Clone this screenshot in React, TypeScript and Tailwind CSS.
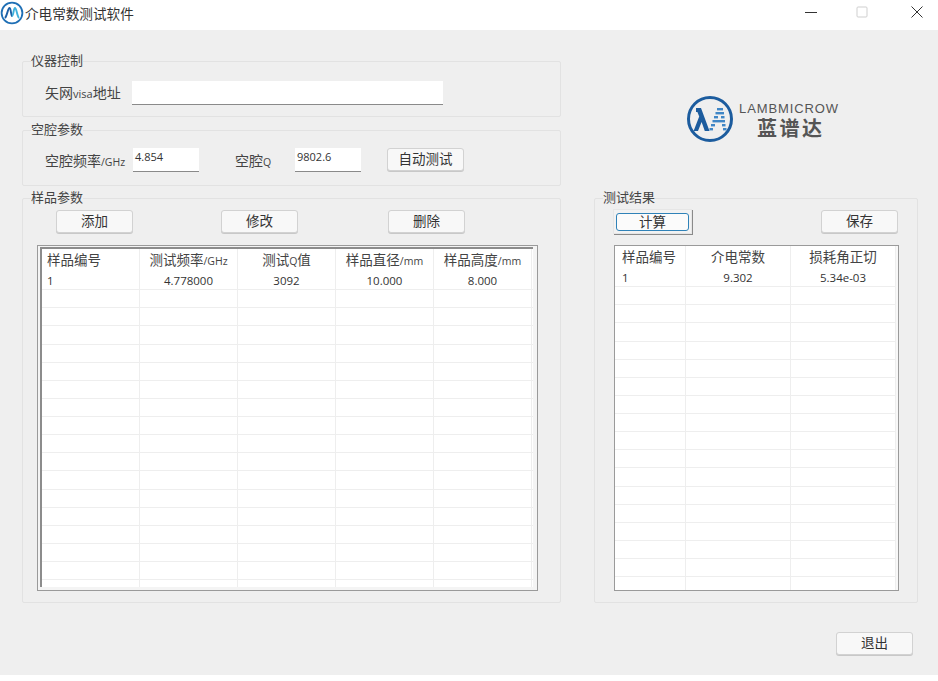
const cjk = "font-['Noto_Sans_CJK_SC','Noto_Sans',sans-serif]";

function Button({ label, className = "" }: { label: string; className?: string }) {
  return (
    <button className={`h-[23px] w-[77px] rounded-[3px] border border-[#d2d2d2] bg-[#f8f8f8] pb-[3px] text-[13.5px] leading-[18px] text-[#333] shadow-[0_1px_0_#c8c8c8] ${className}`}>
      {label}
    </button>
  );
}

function Group({ title, className = "", children }: { title: string; className?: string; children: React.ReactNode }) {
  return (
    <div className={`relative rounded-[2px] border border-[#e2e2e2] ${className}`}>
      <span className="absolute left-[8px] top-[-11px] bg-[#efefef] text-[13px] leading-[18px] text-[#444]">{title}</span>
      {children}
    </div>
  );
}

function Input({ value = "", className = "" }: { value?: string; className?: string }) {
  return (
    <div className={`flex h-[24px] items-start border-b border-[#8a8a8a] bg-white pl-[2px] pt-[1px] font-['Open_Sans',sans-serif] text-[11px] leading-[16px] text-[#333] ${className}`}>
      {value}
    </div>
  );
}

function Cell({ w, pad, children }: { w: number; pad?: string; children?: React.ReactNode }) {
  return (
    <div
      className={`h-full shrink-0 overflow-hidden whitespace-nowrap border-r border-[#eeeeee] ${pad ? `${pad} text-left` : "text-center"}`}
      style={{ width: w }}
    >
      {children}
    </div>
  );
}

function Unit({ children }: { children: React.ReactNode }) {
  return <span className="font-['Open_Sans',sans-serif] text-[10.5px] text-[#444]">{children}</span>;
}

function DataTable({
  widths,
  headers,
  row,
  rowCount,
  firstPad,
}: {
  widths: number[];
  headers: React.ReactNode[];
  row: string[];
  rowCount: number;
  firstPad: string;
}) {
  return (
    <div className="h-full overflow-hidden bg-white">
      <div className="flex h-[23px] text-[13.5px] leading-[20px] text-[#444]">
        {headers.map((h, i) => (
          <Cell key={i} w={widths[i]} pad={i === 0 ? firstPad : undefined}>
            {h}
          </Cell>
        ))}
      </div>
      {Array.from({ length: rowCount }).map((_, r) => (
        <div key={r} className="flex h-[18.125px] border-b border-[#eeeeee] font-['Open_Sans',sans-serif] text-[11.5px] leading-[17px] text-[#333]">
          {widths.map((w, i) => (
            <Cell key={i} w={w} pad={i === 0 ? firstPad : undefined}>
              {r === 0 ? row[i] : ""}
            </Cell>
          ))}
        </div>
      ))}
    </div>
  );
}

function TitleIcon() {
  return (
    <svg viewBox="0 0 24 24" className="h-[24px] w-[24px] shrink-0">
      <circle cx="12" cy="12" r="10.4" fill="none" stroke="#1f6fb5" strokeWidth="1.8" />
      <path d="M5 17 C7 15 8 7 9.5 7 C11 7 11 15 12 15" fill="none" stroke="#1c5fa5" strokeWidth="1.9" />
      <path d="M12 15 C13.5 15 13.5 7 15 7 C16.5 7 17 15 19 17" fill="none" stroke="#3fb0dc" strokeWidth="1.9" />
    </svg>
  );
}

function LogoIcon() {
  // striped right leg of the mark: x, y, width
  const stripes = [
    [31, 13, 6],
    [29.5, 17, 8.5],
    [28, 21, 4],
    [35, 21, 3.5],
    [26.5, 25, 12.5],
    [25, 29, 4],
    [36, 29, 3.5],
    [23.5, 33, 3.5],
    [37, 33, 3.5],
  ];
  return (
    <svg viewBox="0 0 48 48" className="h-[48px] w-[48px] shrink-0">
      <circle cx="24" cy="24" r="21.5" fill="none" stroke="#1c5c9e" strokeWidth="3" />
      <path d="M10 13 H15 L23.5 36 H18.8 L15.6 27 L12 36 H7.6 L13.2 21.5 L11.4 17 H10 Z" fill="#1c5c9e" />
      {stripes.map(([x, y, w], i) => (
        <rect key={i} x={x} y={y} width={w} height="2.4" fill="#3f86c6" />
      ))}
    </svg>
  );
}

export default function App() {
  return (
    <div className={`h-[681px] w-[938px] overflow-hidden bg-white ${cjk}`}>
      {/* Title bar */}
      <div className="flex h-[30px] items-start bg-white">
        <div className="flex items-center pt-[1px]">
          <TitleIcon />
          <span className="ml-[1px] text-[13.6px] leading-[24px] text-[#333]">介电常数测试软件</span>
        </div>
        <div className="ml-auto flex items-center pt-[6px]">
          <svg viewBox="0 0 12 12" className="h-[12px] w-[12px]">
            <path d="M0 6.5 H12" stroke="#333" strokeWidth="1" />
          </svg>
          <svg viewBox="0 0 12 12" className="ml-[39px] h-[12px] w-[12px]">
            <rect x="1" y="1" width="10" height="10" rx="1" fill="none" stroke="#cfcfcf" strokeWidth="1" />
          </svg>
          <svg viewBox="0 0 12 12" className="ml-[43px] mr-[15px] h-[12px] w-[12px]">
            <path d="M0.5 0.5 L11.5 11.5 M11.5 0.5 L0.5 11.5" stroke="#333" strokeWidth="1" />
          </svg>
        </div>
      </div>

      {/* Body */}
      <div className="h-[645px] bg-[#efefef] pl-[22px]">
        <div className="flex">
          {/* Left column */}
          <div className="w-[539px] pt-[31px]">
            <Group title="仪器控制" className="h-[56px]">
              <div className="flex items-start pl-[22px] pt-[19px]">
                <span className="mt-[-1px] w-[87px] text-[14px] leading-[24px] text-[#444]">
                  矢网<span className="font-['Open_Sans',sans-serif] text-[11px]">visa</span>地址
                </span>
                <Input className="w-[311px]" />
              </div>
            </Group>
            <Group title="空腔参数" className="mt-[13px] h-[56px]">
              <div className="flex items-start pl-[22px] pt-[17px]">
                <span className="w-[88px] text-[14px] leading-[24px] text-[#444]">
                  空腔频率<Unit>/GHz</Unit>
                </span>
                <Input value="4.854" className="w-[66px]" />
                <span className="ml-[36px] w-[60px] text-[14px] leading-[24px] text-[#444]">
                  空腔<Unit>Q</Unit>
                </span>
                <Input value="9802.6" className="w-[66px]" />
                <Button label="自动测试" className="ml-[26px]" />
              </div>
            </Group>
            <Group title="样品参数" className="mt-[12px] h-[405px]">
              <div className="flex pl-[33px] pt-[11px]">
                <Button label="添加" />
                <Button label="修改" className="ml-[88px]" />
                <Button label="删除" className="ml-[90px]" />
              </div>
              <div className="ml-[14px] mt-[12px] h-[346px] w-[501px] border border-[#9a9a9a] bg-[#f4f4f4] pb-[3px] pl-[2px] pr-[4px] pt-[1px]">
                <div className="h-full border-l-2 border-t-2 border-[#8c8c8c]">
                  <DataTable
                    widths={[98, 98, 98, 98, 98]}
                    firstPad="pl-[5px]"
                    rowCount={18}
                    headers={[
                      "样品编号",
                      <>测试频率<Unit>/GHz</Unit></>,
                      <>测试<Unit>Q</Unit>值</>,
                      <>样品直径<Unit>/mm</Unit></>,
                      <>样品高度<Unit>/mm</Unit></>,
                    ]}
                    row={["1", "4.778000", "3092", "10.000", "8.000"]}
                  />
                </div>
              </div>
            </Group>
          </div>

          {/* Right column */}
          <div className="ml-[33px] w-[324px]">
            <div className="flex h-[168px] pl-[92px] pt-[65px]">
              <LogoIcon />
              <div className="ml-[5px] flex flex-col">
                <span className="mt-[7px] font-['Liberation_Sans',sans-serif] text-[13px] leading-[14px] tracking-[0.9px] text-[#555]">LAMBMICROW</span>
                <span className="ml-[18px] text-[20px] font-bold leading-[24px] tracking-[2.5px] text-[#555]">蓝谱达</span>
              </div>
            </div>
            <Group title="测试结果" className="h-[405px]">
              <div className="flex items-start pl-[18px] pt-[10px]">
                <div className="flex h-[25px] w-[79px] items-center justify-center bg-[#f2f2f2] shadow-[1px_1px_0_#8a8a8a,inset_0_0_0_1px_#e6e6e6]">
                  <div className="h-[18px] w-[73px] rounded-[3px] border border-[#2f82b8] bg-[#fbfbfb] text-center text-[13.5px] leading-[14px] text-[#333]">计算</div>
                </div>
                <Button label="保存" className="ml-[129px] mt-[1px]" />
              </div>
              <div className="ml-[19px] mt-[11px] h-[346px] w-[285px] border border-[#9a9a9a] bg-[#f8f8f8] pr-[2px]">
                <DataTable
                  widths={[71, 105, 105]}
                  firstPad="pl-[7px]"
                  rowCount={18}
                  headers={["样品编号", "介电常数", "损耗角正切"]}
                  row={["1", "9.302", "5.34e-03"]}
                />
              </div>
            </Group>
          </div>
        </div>

        <div className="flex justify-end pr-[25px] pt-[29px]">
          <Button label="退出" />
        </div>
      </div>
    </div>
  );
}
